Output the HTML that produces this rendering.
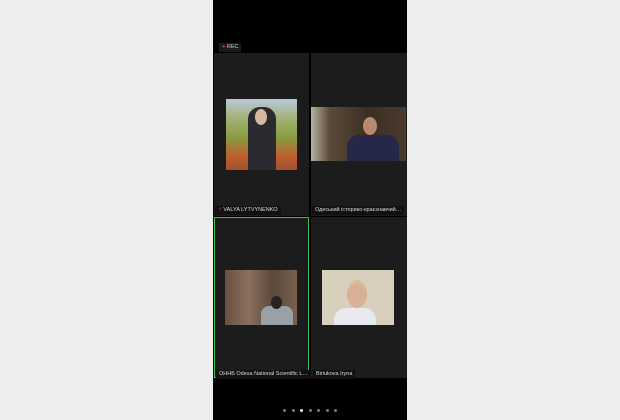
<html><head><style>
body{margin:0;width:620px;height:420px;background:#ededed;position:relative;overflow:hidden;font-family:"Liberation Sans","DejaVu Sans",sans-serif}
.ph{position:absolute;left:213px;top:0;width:194px;height:420px;background:#000}
.t{position:absolute;background:#1c1c1c}
.v{position:absolute}
.l{position:absolute;background:#111;color:#ddd;font-size:5.5px;padding:1px 3px;white-space:nowrap;line-height:7px}
.d{position:absolute;top:409px;width:3px;height:3px;border-radius:50%;background:#777}
</style></head><body>
<div class="ph"></div>
<div class="l" style="left:219px;top:43px;background:#1a1a1a;color:#ccc"><span style="color:#d33">●</span> REC</div>
<div class="t" style="left:214px;top:53px;width:95px;height:163px"></div>
<div class="t" style="left:311px;top:53px;width:96px;height:163px"></div>
<div class="t" style="left:214px;top:217px;width:95px;height:161px;box-shadow:inset 0 0 0 1px #3fbf4f"></div>
<div class="t" style="left:311px;top:217px;width:96px;height:161px"></div>
<div class="v" style="left:226px;top:99px;width:71px;height:71px;background:linear-gradient(180deg,#b8c8d8 0%,#a0b070 30%,#8a9a40 55%,#c06030 80%,#a05030 100%)"><div style="position:absolute;left:22px;top:8px;width:28px;height:63px;background:#2a2a30;border-radius:12px 12px 0 0"></div><div style="position:absolute;left:29px;top:10px;width:12px;height:16px;background:#d8b8a0;border-radius:50%"></div></div>
<div class="v" style="left:311px;top:107px;width:95px;height:54px;background:linear-gradient(90deg,#b8b0a0 0%,#5a4a38 20%,#3a2e24 60%,#4a3a2e 100%)"><div style="position:absolute;left:36px;top:28px;width:52px;height:26px;background:#26284a;border-radius:12px 12px 0 0"></div><div style="position:absolute;left:52px;top:10px;width:14px;height:18px;background:#b88870;border-radius:50%"></div></div>
<div class="v" style="left:225px;top:270px;width:72px;height:55px;background:linear-gradient(90deg,#6a5040,#8a7060,#5a4838,#7a6050)"><div style="position:absolute;left:36px;top:36px;width:32px;height:19px;background:#9aa0a8;border-radius:8px 8px 0 0"></div><div style="position:absolute;left:46px;top:26px;width:11px;height:13px;background:#2a2420;border-radius:50%"></div></div>
<div class="v" style="left:322px;top:270px;width:72px;height:55px;background:#d8d0bc"><div style="position:absolute;left:12px;top:38px;width:42px;height:17px;background:#e8eaf0;border-radius:12px 12px 0 0"></div><div style="position:absolute;left:25px;top:10px;width:20px;height:24px;background:#d8b098;border-radius:50%;border-top:4px solid #d8c090"></div></div>
<div class="l" style="left:215px;top:206px"><span style="color:#e33">⚡</span> VALYA LYTVYNENKO</div>
<div class="l" style="left:312px;top:206px">Одеський історико-краєзнавчий…</div>
<div class="l" style="left:216px;top:370px">ОННБ Odesa National Scientific L…</div>
<div class="l" style="left:313px;top:370px">Biriukova Iryna</div>
<div class="d" style="left:283px"></div><div class="d" style="left:292px"></div><div class="d" style="left:300px;background:#eee"></div><div class="d" style="left:309px"></div><div class="d" style="left:317px"></div><div class="d" style="left:326px"></div><div class="d" style="left:334px"></div>
</body></html>
